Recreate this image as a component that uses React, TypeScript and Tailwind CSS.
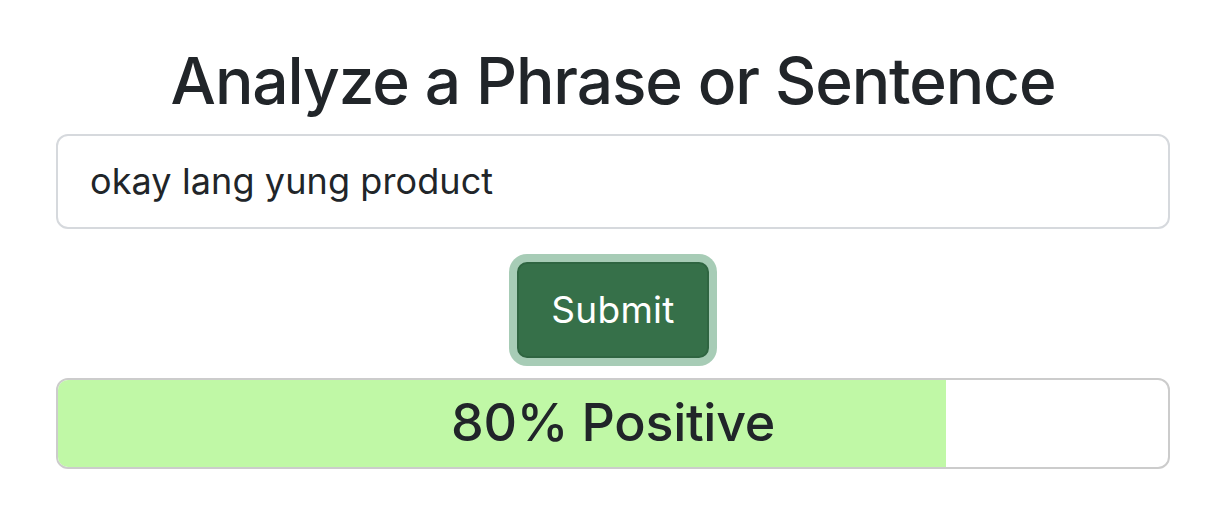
import React from "react";

export default function App() {
  const pct = 80;
  return (
    <div
      className="w-[1226px] h-[532px] bg-white px-[56px] pt-[43px] text-[#212529]"
      style={{ fontFamily: 'Inter, "Noto Sans", sans-serif' }}
    >
      <h1 className="text-center text-[64px] font-medium leading-[1.2] mb-[14px] tracking-[-1.1px]">
        Analyze a Phrase or Sentence
      </h1>
      <input
        className="block w-full h-[95px] border-2 border-[#d6d9dd] rounded-[12px] px-[32px] text-[36px] tracking-[0.1px] text-[#212529] outline-none"
        defaultValue="okay lang yung product"
        style={{ fontFamily: 'Inter, "Noto Sans", sans-serif' }}
      />
      <div className="flex justify-center mt-[33px]">
        <button
          className="w-[192px] h-[96px] rounded-[10px] bg-[#367049] border-2 border-[#2f6541] text-white text-[37px] tracking-[0.3px] ring-8 ring-[#a7ccb6]"
          style={{ fontFamily: 'Inter, "Noto Sans", sans-serif' }}
        >
          Submit
        </button>
      </div>
      <div className="relative mt-[20px] h-[91px] border-2 border-[#cccccc] rounded-[12px] overflow-hidden bg-white">
        <div className="h-full bg-[#c0f8a6]" style={{ width: `${pct}%` }} />
        <div className="absolute inset-0 flex items-center justify-center text-[52px] font-medium tracking-[-0.3px]">
          80% Positive
        </div>
      </div>
    </div>
  );
}
